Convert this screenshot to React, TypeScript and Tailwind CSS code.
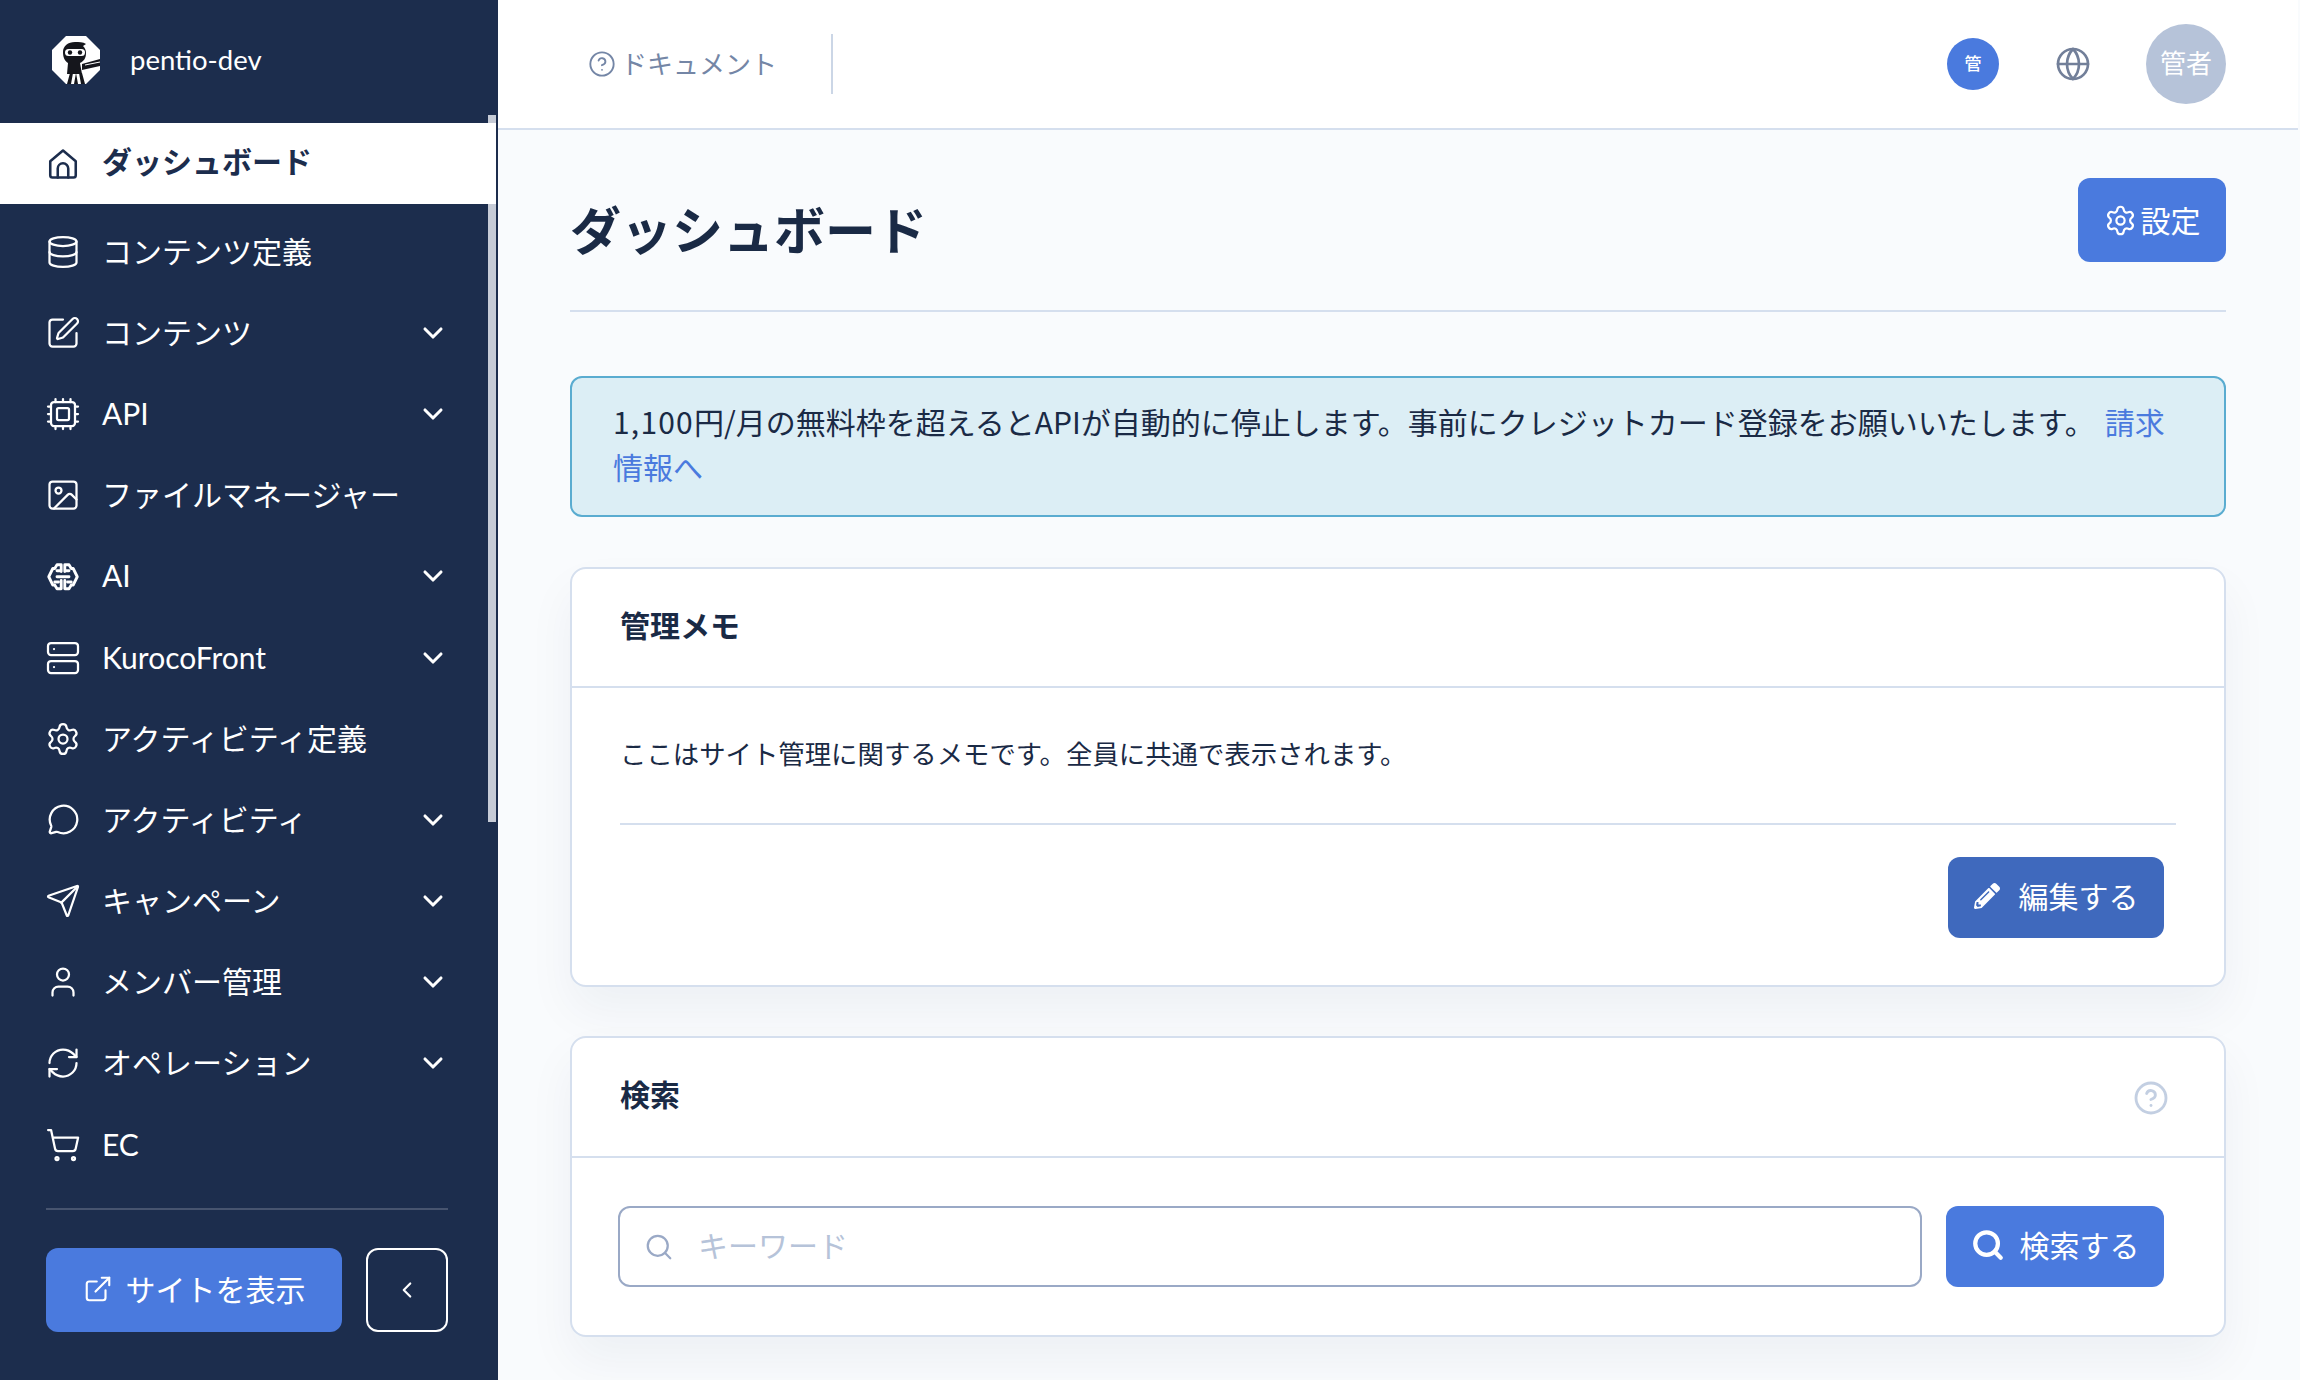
import React from 'react';
import {
    ChevronDown,
    ChevronLeft,
    CircleHelp,
    Cpu,
    Database,
    ExternalLink,
    Globe,
    Image,
    MessageCircle,
    RefreshCw,
    Search,
    Send,
    Server,
    Settings,
    ShoppingCart,
    SquarePen,
    User,
} from 'lucide-react';
import { FaPencilAlt } from 'react-icons/fa';

const HomeIcon = () => (
    <svg width="36" height="36" viewBox="0 0 24 24" fill="none" stroke="currentColor" strokeWidth="1.7" strokeLinejoin="round" strokeLinecap="round">
        <path d="M3.5 10.2 12 3l8.5 7.2V19.5a1.5 1.5 0 0 1-1.5 1.5H5a1.5 1.5 0 0 1-1.5-1.5z" />
        <path d="M8.5 21v-6a3.5 3.5 0 0 1 7 0v6" />
    </svg>
);

const BrainIcon = () => (
    <svg width="36" height="36" viewBox="0 0 24 24" fill="none" stroke="currentColor" strokeWidth="1.9" strokeLinejoin="round" strokeLinecap="round">
        <path d="M10.800 9V4.500H8L6.500 7H5.200L2.500 12.500 5.200 18h1.300L8 20.500h2.800V15" />
        <path d="M13.200 9V4.500H16L17.500 7h1.300l2.700 5.500L18.800 18h-1.300L16 20.500h-2.800V15" />
        <path d="M8 12.500h8M8 8.500h2M14 8.500h2M6.500 16h2.500M15 16h2.500" />
    </svg>
);

const NinjaLogo = () => (
    <svg width="48" height="48" viewBox="0 0 48 48">
        <polygon points="14,0 34,0 48,14 48,34 34,48 14,48 0,34 0,14" fill="#ffffff" />
        <path d="M11 16c0-6 5-10 12-10 4 0 8 0 11 2l-3 2c2 2 3 4 3 7 0 5-2 8-6 10l2 11H15l1-11c-3-2-5-5-5-11z" fill="#15161c" />
        <rect x="13" y="13" width="20" height="7" rx="3.500" fill="#ffffff" />
        <circle cx="18" cy="16.500" r="2.200" fill="#15161c" />
        <circle cx="28" cy="16.500" r="2.200" fill="#15161c" />
        <path d="M30 28l18-5v7l-18 4z" fill="#15161c" />
        <path d="M33 28.500l15-3v1l-15 3z" fill="#ffffff" />
        <path d="M15 48l3-11h3l-2 11zM22 48l2-11 2 11zM29 48l-2-11h3l3 11z" fill="#15161c" />
    </svg>
);

interface NavItem {
    label: string;
    icon: React.ReactNode;
    hasMenu?: boolean;
}

const iconProps = { size: 36, strokeWidth: 1.5 };

const navItems: NavItem[] = [
    { label: 'コンテンツ定義', icon: <Database {...iconProps} /> },
    { label: 'コンテンツ', icon: <SquarePen {...iconProps} />, hasMenu: true },
    { label: 'API', icon: <Cpu {...iconProps} />, hasMenu: true },
    { label: 'ファイルマネージャー', icon: <Image {...iconProps} /> },
    { label: 'AI', icon: <BrainIcon />, hasMenu: true },
    { label: 'KurocoFront', icon: <Server {...iconProps} />, hasMenu: true },
    { label: 'アクティビティ定義', icon: <Settings {...iconProps} /> },
    { label: 'アクティビティ', icon: <MessageCircle size={33} strokeWidth={1.65} />, hasMenu: true },
    { label: 'キャンペーン', icon: <Send {...iconProps} />, hasMenu: true },
    { label: 'メンバー管理', icon: <User {...iconProps} />, hasMenu: true },
    { label: 'オペレーション', icon: <RefreshCw {...iconProps} />, hasMenu: true },
    { label: 'EC', icon: <ShoppingCart {...iconProps} /> },
];

const Sidebar = () => (
    <aside className="relative flex h-[1380px] w-[498px] shrink-0 flex-col bg-[#1c2d4d] text-white">
        <div className="flex h-[123px] shrink-0 items-center gap-[30px] pb-[3px] pl-[52px]">
            <NinjaLogo />
            <span className="text-[27.5px] leading-none">pentio-dev</span>
        </div>

        {/* scrollbar thumb sits over the nav */}
        <div className="absolute left-[488px] top-[115px] h-[707px] w-[8px] bg-[#c6cbd6]" />

        <nav className="relative mr-[2px] flex flex-col">
            <div className="flex h-[81px] items-center bg-white pl-[45px] text-[#1c2d4d]">
                <span className="flex w-[36px] justify-center">
                    <HomeIcon />
                </span>
                <span className="ml-[21px] pb-[6px] text-[30px] font-bold leading-none">ダッシュボード</span>
            </div>
            <div className="mt-[7px] flex flex-col">
                {navItems.map((item) => (
                    <div key={item.label} className="flex h-[81.2px] items-center pl-[45px] pr-[47px]">
                        <span className="flex w-[36px] justify-center">{item.icon}</span>
                        <span className="ml-[21px] flex-1 pb-[2px] text-[30px] leading-none">{item.label}</span>
                        {item.hasMenu && <ChevronDown size={32} strokeWidth={2.3} />}
                    </div>
                ))}
            </div>
        </nav>

        <div className="mx-[46px] mt-[23px] h-[2px] w-[402px] bg-[#47546f]" />

        <div className="mx-[46px] mt-[38px] flex gap-[24px]">
            <button className="flex h-[84px] w-[296px] items-center justify-center gap-[13px] rounded-[12px] bg-[#4a7ade] pb-[2px] text-[30px]">
                <ExternalLink size={30} strokeWidth={1.7} />
                サイトを表示
            </button>
            <button className="flex h-[84px] w-[82px] items-center justify-center rounded-[12px] border-2 border-white">
                <ChevronLeft size={26} strokeWidth={2} />
            </button>
        </div>
    </aside>
);

const Header = () => (
    <header className="mr-[2px] flex h-[130px] shrink-0 items-center border-b-2 border-[#d5dfee] bg-white pb-[1px]">
        <div className="ml-[90px] flex items-center gap-[5px] text-[#7486a6]">
            <CircleHelp size={28} strokeWidth={1.6} />
            <span className="text-[26px] leading-none">ドキュメント</span>
        </div>
        <div className="ml-[54px] h-[60px] w-[2px] bg-[#cbd6e6]" />
        <div className="ml-auto mr-[72px] flex items-center">
            <div className="flex h-[52px] w-[52px] items-center justify-center rounded-full bg-[#4a7ade] text-[17px] font-medium text-white">
                管
            </div>
            <Globe className="ml-[56px] text-[#727f99]" size={36} strokeWidth={1.8} />
            <div className="ml-[55px] flex h-[80px] w-[80px] items-center justify-center rounded-full bg-[#b6c3d9] text-[26px] text-white">
                管者
            </div>
        </div>
    </header>
);

const cardClass = 'rounded-[16px] border-2 border-[#d5dfee] bg-white shadow-[0_24px_48px_rgba(28,45,77,0.05)]';

export default function App() {
    return (
        <div className="flex h-[1380px] w-[2300px] overflow-hidden bg-[#f9fbfd] font-['Lato','Noto_Sans_CJK_JP',sans-serif] text-[#1a2a45]">
            <Sidebar />
            <main className="flex min-w-0 flex-1 flex-col">
                <Header />
                <div className="flex flex-col pl-[72px] pr-[74px] pt-[48px]">
                    <div className="box-content flex h-[132px] shrink-0 items-start justify-between border-b-2 border-[#d5dfee]">
                        <h1 className="mt-[19px] text-[51px] font-bold leading-[68px]">ダッシュボード</h1>
                        <button className="flex h-[84px] w-[148px] items-center justify-center gap-[4px] rounded-[12px] bg-[#4a7ade] text-[30px] text-white">
                            <Settings size={33} strokeWidth={1.6} />
                            設定
                        </button>
                    </div>

                    <div className="mt-[64px] h-[141px] rounded-[12px] border-2 border-[#5aacd0] bg-[#dceef5] pl-[41px] pr-[48px] pt-[21px] font-['Noto_Sans_CJK_JP',sans-serif] text-[30px] leading-[45px]">
                        <span className="tracking-[1.2px]">1,100</span>円/月の無料枠を超えるとAPIが自動的に停止します。事前にクレジットカード登録をお願いいたします。
                        <a className="ml-[10px] text-[#4a7ade]">請求情報へ</a>
                    </div>

                    <section className={`mt-[50px] h-[420px] ${cardClass}`}>
                        <div className="flex h-[119px] items-center border-b-2 border-[#d5dfee] pb-[5px] pl-[48px]">
                            <h2 className="text-[30px] font-bold leading-none">管理メモ</h2>
                        </div>
                        <div className="px-[48px]">
                            <p className="mt-[46px] text-[26.4px] leading-[40px]">ここはサイト管理に関するメモです。全員に共通で表示されます。</p>
                            <div className="mt-[49px] flex flex-col border-t-2 border-[#d5dfee] pt-[32px]">
                                <button className="ml-auto mr-[12px] flex h-[81px] w-[216px] items-center justify-center gap-[19px] rounded-[12px] bg-[#3f69bd] pb-[3px] text-[30px] text-white">
                                    <FaPencilAlt size={26} />
                                    編集する
                                </button>
                            </div>
                        </div>
                    </section>

                    <section className={`mt-[49px] h-[301px] ${cardClass}`}>
                        <div className="flex h-[120px] items-center justify-between border-b-2 border-[#d5dfee] pb-[6px] pl-[48px] pr-[55px]">
                            <h2 className="text-[30px] font-bold leading-none">検索</h2>
                            <CircleHelp size={36} strokeWidth={1.9} className="mt-[8px] text-[#c3cfe2]" />
                        </div>
                        <div className="flex items-center gap-[24px] pl-[46px] pr-[60px] pt-[48px]">
                            <div className="flex h-[81px] flex-1 items-center rounded-[12px] border-2 border-[#9aa9c6] pl-[24px]">
                                <Search size={30} strokeWidth={1.8} className="text-[#9aa9c6]" />
                                <span className="ml-[24px] pb-[4px] text-[30px] leading-none text-[#b6c3d9]">キーワード</span>
                            </div>
                            <button className="flex h-[81px] w-[218px] items-center justify-center gap-[15px] rounded-[12px] bg-[#4a7ade] pb-[3px] text-[30px] text-white">
                                <Search size={34} strokeWidth={3} />
                                検索する
                            </button>
                        </div>
                    </section>
                </div>
            </main>
        </div>
    );
}
